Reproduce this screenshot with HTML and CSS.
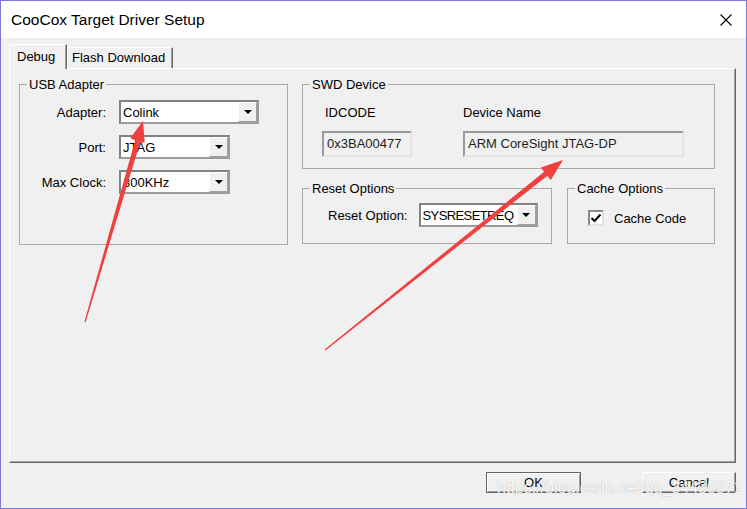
FILE: index.html
```html
<!DOCTYPE html>
<html lang="en">
<head>
    <meta charset="UTF-8">
    <title>CooCox Target Driver Setup</title>
    <link rel="stylesheet" href="styles.css">
</head>
<body>
    <div class="window">
        <div class="titlebar">
            <span class="title">CooCox Target Driver Setup</span>
            <svg class="close" width="12" height="12" viewBox="0 0 12 12">
                <path d="M0.5 0.5L11.5 11.5M11.5 0.5L0.5 11.5" stroke="#000" stroke-width="1.1" fill="none"/>
            </svg>
        </div>

        <div class="client">
            <div class="tabs">
                <div class="tab active">Debug</div>
                <div class="tab flash">Flash Download</div>
            </div>

            <div class="panel">
                <fieldset class="group usb">
                    <legend>USB Adapter</legend>
                    <div class="form">
                        <label>Adapter:</label>
                        <div class="combo adapter">
                            <span class="combo-text">Colink</span>
                            <span class="combo-btn"><i class="tri"></i></span>
                        </div>
                        <label>Port:</label>
                        <div class="combo short">
                            <span class="combo-text">JTAG</span>
                            <span class="combo-btn"><i class="tri"></i></span>
                        </div>
                        <label>Max Clock:</label>
                        <div class="combo short">
                            <span class="combo-text">300KHz</span>
                            <span class="combo-btn"><i class="tri"></i></span>
                        </div>
                    </div>
                </fieldset>

                <div class="right-col">
                    <fieldset class="group swd">
                        <legend>SWD Device</legend>
                        <div class="swd-grid">
                            <span class="idcode-label">IDCODE</span>
                            <span>Device Name</span>
                            <div class="field">0x3BA00477</div>
                            <div class="field">ARM CoreSight JTAG-DP</div>
                        </div>
                    </fieldset>

                    <div class="row">
                        <fieldset class="group reset">
                            <legend>Reset Options</legend>
                            <div class="inline">
                                <label>Reset Option:</label>
                                <div class="combo reset-combo">
                                    <span class="combo-text tight">SYSRESETREQ</span>
                                    <span class="combo-btn"><i class="tri"></i></span>
                                </div>
                            </div>
                        </fieldset>
                        <fieldset class="group cache">
                            <legend>Cache Options</legend>
                            <div class="inline check-row">
                                <span class="checkbox">
                                    <svg width="12" height="12" viewBox="0 0 12 12">
                                        <path d="M1.5 6L4.5 9L10.5 2.5" stroke="#000" stroke-width="2" fill="none"/>
                                    </svg>
                                </span>
                                <span>Cache Code</span>
                            </div>
                        </fieldset>
                    </div>
                </div>
            </div>

            <div class="actions">
                <button class="btn default">OK</button>
                <button class="btn cancel">Cancel</button>
            </div>
        </div>

        <!-- red arrows pasted on the screenshot -->
        <svg class="marks" width="747" height="509" viewBox="0 0 747 509">
            <polygon fill="#f0403f" points="85.6,322.2 139.9,142.9 144.7,142.3 143,121 130.3,138.1 135.1,140.5 84.4,321.8"/>
            <polygon fill="#f0403f" points="325.4,350.5 547.4,175.7 550.8,180 563,160 540.8,167.4 544.2,171.7 324.6,349.5"/>
        </svg>

        <div class="watermark">https://blog.csdn.net/qq_34430371</div>
    </div>
</body>
</html>
```

FILE: styles.css
```css
body {
    margin: 0;
    font-family: "Liberation Sans", Arial, sans-serif;
    font-size: 13px;
    color: #000;
    background: #fff;
}

.window {
    position: relative;
    width: 747px;
    height: 509px;
    box-sizing: border-box;
    border: 1px solid #7b7bdc;
    background: #f0f0f0;
    overflow: hidden;
}

.titlebar {
    height: 37px;
    background: #fff;
    display: flex;
    align-items: center;
    justify-content: space-between;
    padding: 0 14px 0 10px;
}

.title {
    font-size: 15.5px;
}

.client {
    padding: 6px 10px 0 8px;
}

/* tabs */
.tabs {
    display: flex;
    align-items: flex-end;
    height: 24px;
}

.tab {
    box-sizing: border-box;
    height: 21px;
    line-height: 20px;
    padding-left: 4px;
    border-top: 1px solid #fff;
    border-left: 1px solid #fff;
    border-right: 1px solid #696969;
    box-shadow: inset -1px 0 0 #a0a0a0;
    white-space: nowrap;
}

.tab.flash {
    width: 106px;
}

.tab.active {
    height: 25px;
    width: 58px;
    line-height: 23px;
    padding-left: 7px;
    margin-bottom: -1px;
    position: relative;
    z-index: 1;
    background: #f0f0f0;
}

.panel {
    box-sizing: border-box;
    height: 395px;
    border-top: 1px solid #fff;
    border-left: 1px solid #fff;
    border-right: 1px solid #696969;
    border-bottom: 1px solid #696969;
    box-shadow: inset -1px -1px 0 #a0a0a0;
    display: flex;
    align-items: flex-start;
    gap: 14px;
    padding: 8px 0 0 9px;
}

/* group boxes */
.group {
    box-sizing: border-box;
    margin: 0;
    padding: 0;
    min-width: 0;
    border: 1px solid #a9a9a9;
}

.group legend {
    margin-left: 7px;
    padding: 0 2px;
    line-height: 15px;
}

.usb {
    width: 269px;
    height: 168px;
}

.form {
    display: grid;
    grid-template-columns: 86px auto;
    column-gap: 13px;
    row-gap: 11px;
    align-items: center;
    justify-items: start;
    padding-top: 8px;
}

.form label {
    justify-self: end;
}

.right-col {
    display: flex;
    flex-direction: column;
    gap: 12px;
}

.swd {
    width: 413px;
    height: 92px;
}

.swd-grid {
    display: grid;
    grid-template-columns: 90px 221px;
    column-gap: 51px;
    row-gap: 11px;
    padding: 13px 0 0 19px;
    line-height: 15px;
}

.idcode-label {
    margin-left: 3px;
}

.field {
    box-sizing: border-box;
    height: 26px;
    line-height: 22px;
    padding-left: 3px;
    border: 2px solid;
    border-color: #9a9a9a #e3e3e3 #e3e3e3 #9a9a9a;
    background: #f0f0f0;
    color: #1e1e1e;
    white-space: nowrap;
}

.row {
    display: flex;
    gap: 15px;
}

.reset {
    width: 250px;
    height: 63px;
}

.cache {
    width: 148px;
    height: 63px;
}

.inline {
    display: flex;
    align-items: center;
}

.reset .inline {
    gap: 11px;
    padding: 7px 0 0 25px;
}

.check-row {
    gap: 10px;
    padding: 14px 0 0 20px;
}

.checkbox {
    box-sizing: border-box;
    width: 16px;
    height: 16px;
    border: 2px solid;
    border-color: #8a8a8a #e3e3e3 #e3e3e3 #8a8a8a;
    background: #fff;
    display: flex;
    align-items: center;
    justify-content: center;
}

/* combo boxes */
.combo {
    box-sizing: border-box;
    height: 24px;
    display: flex;
    border: 2px solid;
    border-color: #828282 #9c9c9c #9c9c9c #828282;
    background: #fff;
}

.combo.adapter {
    width: 140px;
}

.combo.short {
    width: 111px;
}

.combo.reset-combo {
    width: 119px;
}

.combo-text {
    flex: 1;
    min-width: 0;
    overflow: hidden;
    white-space: nowrap;
    line-height: 21px;
    padding-left: 2px;
}

.combo-text.tight {
    letter-spacing: -0.6px;
}

.combo-btn {
    box-sizing: border-box;
    width: 19px;
    height: 20px;
    background: #f0f0f0;
    border-top: 1px solid #fff;
    border-left: 1px solid #fff;
    border-right: 1px solid #a0a0a0;
    border-bottom: 1px solid #a0a0a0;
    display: flex;
    align-items: center;
    justify-content: center;
}

.tri {
    width: 0;
    height: 0;
    border-left: 4px solid transparent;
    border-right: 4px solid transparent;
    border-top: 4px solid #000;
}

/* bottom buttons */
.actions {
    display: flex;
    justify-content: flex-end;
    gap: 61px;
    padding-top: 9px;
}

.btn {
    box-sizing: border-box;
    height: 21px;
    padding: 0;
    font-family: inherit;
    font-size: 13px;
    color: #000;
    background: #f0f0f0;
}

.btn.default {
    width: 95px;
    border: 1px solid #646464;
    box-shadow: inset 1px 1px 0 #fff, inset -1px -1px 0 #a0a0a0;
}

.btn.cancel {
    width: 94px;
    border: 1px solid;
    border-color: #fff #696969 #696969 #fff;
    box-shadow: inset -1px -1px 0 #a0a0a0;
}

.marks {
    position: absolute;
    top: -1px;
    left: -1px;
    pointer-events: none;
}

.watermark {
    position: absolute;
    left: 496px;
    top: 478px;
    font-family: "Liberation Sans", Arial, sans-serif;
    font-size: 16px;
    color: #fff;
    text-shadow: 0 0 1px #8c8c8c;
    opacity: 0.85;
    white-space: nowrap;
    pointer-events: none;
}
```
